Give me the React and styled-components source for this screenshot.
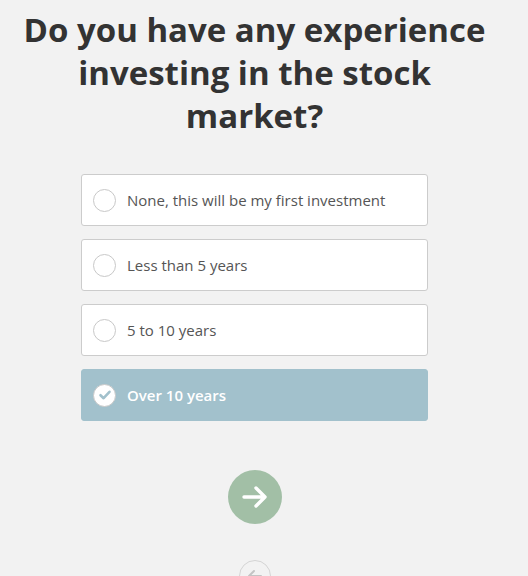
import React, { useState } from 'react';
import styled, { createGlobalStyle } from 'styled-components';

const GlobalStyle = createGlobalStyle`
  html, body {
    margin: 0;
    padding: 0;
    background: #f2f2f2;
    font-family: "Open Sans", Lato, Arial, sans-serif;
  }
`;

const Page = styled.div`
  width: 509px;
  height: 576px;
  overflow: hidden;
  display: flex;
  flex-direction: column;
  align-items: center;
  padding-top: 8px;
  box-sizing: border-box;
  & > * {
    flex-shrink: 0;
  }
`;

const Title = styled.h1`
  margin: 0;
  width: 480px;
  text-align: center;
  font-size: 33px;
  line-height: 43px;
  font-weight: 700;
  color: #333;
`;

const Options = styled.div`
  margin-top: 37px;
  width: 347px;
  display: flex;
  flex-direction: column;
  gap: 13px;
`;

const Option = styled.div`
  height: 52px;
  box-sizing: border-box;
  border-radius: 3px;
  border: 1px solid ${p => (p.$selected ? '#a2c1cc' : '#cccccc')};
  background: ${p => (p.$selected ? '#a2c1cc' : '#ffffff')};
  color: ${p => (p.$selected ? '#ffffff' : '#555555')};
  display: flex;
  align-items: center;
  padding-left: 11px;
  gap: 11px;
  font-size: 15px;
  font-weight: ${p => (p.$selected ? 600 : 400)};
  cursor: pointer;
`;

const Radio = styled.span`
  width: 23px;
  height: 23px;
  border-radius: 50%;
  box-sizing: border-box;
  border: 1px solid #c8c8c8;
  background: #fff;
  display: flex;
  align-items: center;
  justify-content: center;
  flex-shrink: 0;
`;

const NextButton = styled.button`
  margin-top: 49px;
  width: 54px;
  height: 54px;
  border-radius: 50%;
  border: none;
  background: #a2bfa6;
  display: flex;
  align-items: center;
  justify-content: center;
  padding: 0;
  cursor: pointer;
`;

const BackButton = styled.button`
  margin-top: 36px;
  width: 32px;
  height: 32px;
  border-radius: 50%;
  border: 1px solid #d4d4d4;
  background: transparent;
  display: flex;
  align-items: center;
  justify-content: center;
  padding: 0;
`;

const options = [
  'None, this will be my first investment',
  'Less than 5 years',
  '5 to 10 years',
  'Over 10 years',
];

export default function App() {
  const [selected, setSelected] = useState(3);
  return (
    <>
      <GlobalStyle />
      <Page>
        <Title>Do you have any experience investing in the stock market?</Title>
        <Options>
          {options.map((label, i) => (
            <Option key={label} $selected={selected === i} onClick={() => setSelected(i)}>
              <Radio>
                {selected === i && (
                  <svg width="14" height="14" viewBox="0 0 14 14">
                    <path d="M2.5 7.2 L5.6 10.2 L11.5 3.8" fill="none" stroke="#a2c1cc" strokeWidth="2.6" strokeLinecap="round" strokeLinejoin="round" />
                  </svg>
                )}
              </Radio>
              {label}
            </Option>
          ))}
        </Options>
        <NextButton>
          <svg width="30" height="30" viewBox="0 0 30 30">
            <path d="M4 15 H25 M16 6 L25 15 L16 24" fill="none" stroke="#fff" strokeWidth="3.4" strokeLinecap="round" strokeLinejoin="round" />
          </svg>
        </NextButton>
        <BackButton>
          <svg width="18" height="18" viewBox="0 0 18 18">
            <path d="M15 9 H3 M8 4 L3 9 L8 14" fill="none" stroke="#c4c4c4" strokeWidth="2" strokeLinecap="round" strokeLinejoin="round" />
          </svg>
        </BackButton>
      </Page>
    </>
  );
}
